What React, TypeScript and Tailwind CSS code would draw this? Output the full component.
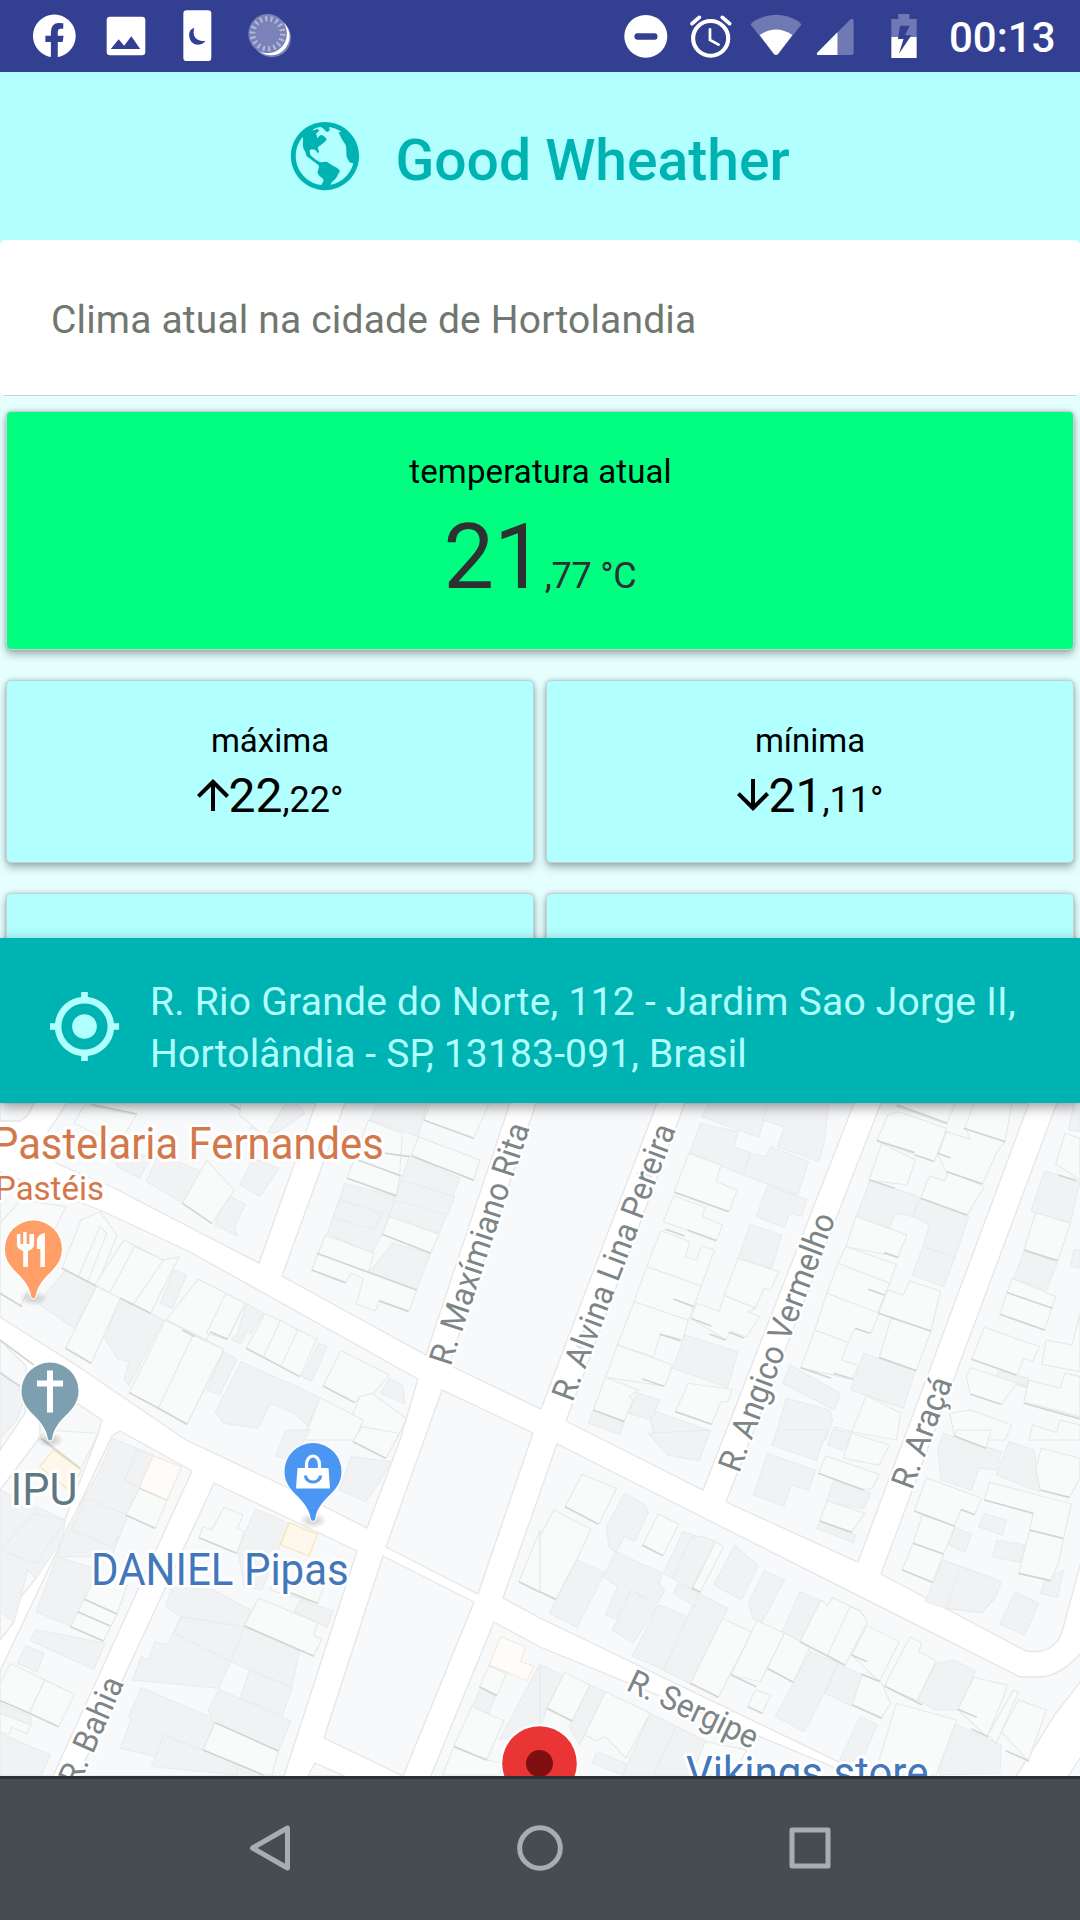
import type { ReactNode } from "react";
import { IoMdArrowDown, IoMdArrowUp, IoMdGlobe, IoMdLocate } from "react-icons/io";

/* ---------- status bar ---------- */

function Glyph({ x, w, className, children }: { x: number; w: number; className: string; children: ReactNode }) {
  return (
    <svg viewBox={`${x} 0 ${w} 216`} preserveAspectRatio="none" fill="#fff" className={`h-[72px] shrink-0 ${className}`}>
      {children}
    </svg>
  );
}

function StatusBar() {
  return (
    <header className="flex h-[72px] shrink-0 justify-between bg-[#334092] pl-[33px] pr-[24px]">
      <div className="flex">
        <Glyph x={95} w={125} className="w-[43px]">
          <path d="M147 171V126H131V107H147V96Q148 69 170 69Q178 69 183 70V86H176Q167 86 167 96V107H184L181 126H167V171A62 64 0 1 0 147 171Z" />
        </Glyph>
        <Glyph x={308} w={117} className="ml-[30px] w-[40px]">
          <path fillRule="evenodd" d="M320 50H413Q423 50 423 60V156Q423 166 413 166H320Q310 166 310 156V60Q310 50 320 50ZM322 147H408L382 109L361 137L345 118Z" />
        </Glyph>
        <Glyph x={532} w={85} className="ml-[37px] w-[29px]">
          <rect x="533" y="31" width="82" height="152" rx="10" />
          <path d="M565 83Q549 88 550 107Q552 132 575 134Q590 134 598 122C575 126 557 112 565 83Z" fill="#334092" />
        </Glyph>
        <Glyph x={720} w={128} className="ml-[36px] w-[44px]">
          <ellipse cx="789" cy="114" rx="56" ry="58" opacity=".35" />
          <ellipse cx="787" cy="109" rx="54" ry="57" />
          <ellipse cx="777" cy="101" rx="56" ry="59" fill="#7a82b8" />
          <ellipse cx="777" cy="101" rx="44" ry="45" fill="none" stroke="#b3b8d9" strokeWidth="16" strokeDasharray="6 9.500" />
        </Glyph>
      </div>
      <div className="flex">
        <Glyph x={243} w={127} className="w-[44px]">
          <path fillRule="evenodd" d="M306 45A62 64 0 1 1 305.900 45ZM281 100Q273 101 273 109.500Q273 118 281 119H333Q340 118 340 109.500Q340 101 333 100Z" />
        </Glyph>
        <Glyph x={435} w={122} className="ml-[22px] w-[42px]">
          <g fill="none" stroke="#fff" strokeLinecap="round">
            <ellipse cx="495" cy="115" rx="51" ry="52" strokeWidth="12" />
            <path d="M441 71L462 52M529 52L550 71" strokeWidth="11" />
            <path d="M493 88V120L518 134" strokeWidth="8" />
          </g>
        </Glyph>
        <Glyph x={608} w={152} className="ml-[18px] w-[52px]">
          <path d="M610 74Q612 68 620 63Q684 26 748 63Q756 68 758 74L690 162Q684 168 678 162Z" opacity=".3" />
          <path d="M636 105Q684 72 732 105L690 162Q684 168 678 162Z" />
        </Glyph>
        <Glyph x={803} w={110} className="ml-[14px] w-[38px]">
          <path d="M805 160L903 58Q911 54 912 62V158Q912 165 905 165H808Q804 164 805 160Z" opacity=".3" />
          <path d="M806 159L865 97V165H808Q804 163 806 159Z" />
        </Glyph>
        <Glyph x={1021} w={75} className="ml-[37px] w-[26px]">
          <path d="M1042 42H1074V57H1095V111H1022V57H1042Z" opacity=".3" />
          <path d="M1022 111H1095V174H1022Z" />
          <path d="M1047 77H1075L1062 106H1080L1044 161L1057 117H1041Z" fill="#334092" />
        </Glyph>
        <span className="ml-[32px] w-[107px] whitespace-nowrap pt-[14px] text-[42px] font-medium leading-[48px] text-white">00:13</span>
      </div>
    </header>
  );
}

/* ---------- weather cards ---------- */

function Card({ tint, className, children }: { tint: string; className: string; children?: ReactNode }) {
  return (
    <div className={`flex flex-col items-center rounded-[5px] border border-[#c9d0d0] shadow-[0_5px_8px_rgba(0,0,0,0.26),0_0_5px_rgba(0,0,0,0.2)] ${tint} ${className}`}>
      {children}
    </div>
  );
}

function Extreme({ label, whole, cents, up }: { label: string; whole: string; cents: string; up?: boolean }) {
  const Arrow = up ? IoMdArrowUp : IoMdArrowDown;
  return (
    <Card tint="bg-[#b2ffff]" className="h-[183px] flex-1 pt-[40px] text-black">
      <span className="text-[33px] leading-[40px]">{label}</span>
      <div className="mt-[5px] flex h-[60px] items-baseline leading-[60px]">
        <Arrow className="-ml-[8px] -mr-[8px] mb-[2px] h-[48px] w-[48px] self-center" />
        <span className="text-[48px]">{whole}</span>
        <span className="text-[36px]">{cents}</span>
      </div>
    </Card>
  );
}

/* ---------- map ---------- */

const BLOCKS = [
  "0,1103 0,1121 20,1121 28,1115 34,1103",
  "67,1103 36,1150 60,1165 114,1188 259,1263 316,1103",
  "345,1103 282,1276 426,1355 510,1103",
  "536,1103 449,1365 541,1409 657,1103",
  "685,1103 566,1421 703,1490 854,1103",
  "881,1103 726,1502 858,1562 1029,1103",
  "0,1172 100,1210 190,1252 418,1379 400,1440 367,1528 282,1485 186,1440 79,1367 0,1317",
  "0,1340 26,1366 25,1413 7,1440 0,1450",
  "40,1405 78,1404 102,1420 98,1434 65,1520 36,1578 20,1598 14,1622 0,1640 0,1490 40,1437",
  "112,1436 120,1431 192,1471 53,1776 0,1776 0,1671",
  "214,1483 357,1551 284,1776 78,1776",
  "442,1390 386,1547 478,1594 533,1433",
  "383,1556 474,1602 403,1776 324,1738",
  "315,1763 345,1776 308,1776",
  "494,1622 540,1647 829,1765 850,1778 430,1778",
];

type Tile = { x: number; y: number; gray: string[]; light: string[]; edges: string[] };

const TILES: Tile[] = [
  {
    x: 0, y: 1100,
    gray: ["425,245 460,160 585,215 530,310", "697,255 735,175 810,205 755,290", "655,285 713,312 680,380 690,408 625,375", "330,150 440,170 405,235 340,200", "800,100 885,40 860,10 830,10 725,85", "110,610 190,510 280,560 215,685", "305,715 350,590 475,660 375,855 360,840 375,785 340,775", "465,610 505,510 542,525 500,625", "600,870 650,755 688,778 637,885", "625,935 700,785 925,890 895,980 855,940 785,910 750,985 650,970", "1105,880 1130,835 1170,858 1175,912", "690,700 715,610 765,640 730,700 715,695 700,730 672,720", "875,830 925,730 950,740 905,843", "950,400 985,300 1000,250 1150,290 1110,400 1080,460", "968,352 1085,390 1110,340 985,300", "1150,285 1190,165 1335,235 1275,400 1130,350", "1165,240 1320,290 1300,345 1145,300", "1140,430 1250,460 1210,570 1070,520", "1075,60 1095,10 1240,10 1215,110", "0,820 75,880 50,960 0,1015"],
    light: ["215,70 245,15 395,45 345,135", "530,310 600,180 680,270 615,370", "700,10 830,10 770,110 695,45", "0,370 60,300 190,320 60,620 0,580", "180,505 235,360 290,335 340,405 280,560", "228,530 290,380 310,400 255,545", "275,555 360,420 475,480 520,470 437,640", "318,580 390,440 475,480 385,615", "190,745 280,560 350,595 265,790", "483,660 575,537 712,610 660,718 610,695 600,720", "600,700 655,580 712,610 660,718", "375,878 480,660 650,748 543,973", "460,925 560,705 650,748 543,973", "715,745 770,640 920,717 870,830", "765,770 815,660 865,690 815,800", "938,858 990,752 1130,825 1085,880 1045,890 1030,908", "1045,890 1080,880 1180,955 1150,1020 1000,1000", "880,1020 930,893 1055,960 1030,1020", "1230,60 1250,10 1420,10 1375,115", "1195,165 1215,110 1393,180 1375,243", "1008,235 1070,60 1168,100 1160,230 1150,288", "905,510 945,405 1085,460 1070,515 1210,570 1187,635 1100,605 1090,633 1035,612 1055,535 1020,520 1003,550", "1110,403 1130,350 1275,403 1250,460"],
    edges: ["180,505 280,558", "350,595 437,640", "190,745 265,790", "530,690 565,710", "375,878 460,925 543,973", "715,745 870,830", "938,858 1030,908", "905,510 1003,548", "1100,602 1187,635", "1008,235 1150,287", "1230,60 1375,115", "1195,168 1375,240", "1110,403 1250,460", "530,310 615,370", "610,695 660,718", "920,460 1210,570", "1040,180 1165,228", "1085,155 1190,170", "265,13 398,42", "670,12 698,28", "0,720 98,795", "0,818 60,860", "0,580 65,620"],
  },
  {
    x: 540, y: 1100,
    gray: ["470,50 490,10 665,10 635,112", "645,60 665,10 840,10 825,125 810,185 690,140 710,80", "435,158 465,70 575,95 565,140 610,158 590,225", "590,225 610,160 655,170 670,140 780,185 748,285", "628,350 660,258 775,298 760,348 725,340 710,383", "575,475 610,373 702,405 672,505", "918,350 958,240 1100,290 1085,350 1030,340 1015,385", "1085,350 1105,295 1245,350 1205,473 1112,440 1130,375", "1080,525 1112,440 1205,473 1172,560", "385,805 420,705 575,755 545,862", "705,850 725,795 872,880 855,930", "902,870 940,760 1090,812 1055,925", "715,895 840,930 850,960 830,1020 680,1020", "258,940 280,878 347,900 325,960", "140,970 155,930 245,963 232,1003", "320,960 335,935 490,990 485,1020 330,1000", "1425,335 1465,212 1568,245 1540,370", "1375,535 1405,455 1503,485 1470,572", "1535,90 1550,10 1568,10 1568,95", "1540,500 1550,450 1568,450 1568,505", "845,1020 855,980 905,995 900,1020", "1325,828 1330,812 1420,835 1412,865"],
    light: ["390,275 432,160 525,195 512,245 573,270 548,335", "358,365 388,287 478,322 472,350 530,375 512,422", "310,500 350,392 435,425 422,470 455,480 470,437 507,450 468,558", "273,605 310,500 468,558 450,610 430,660", "225,735 273,605 430,660 415,720 350,702 330,770", "190,832 225,735 385,795 370,840 360,858", "155,930 190,832 285,870 258,890 270,900 245,963", "393,935 430,850 558,868 545,905 525,905 498,973", "535,585 575,475 693,515 670,570 650,565 625,625", "438,655 455,610 520,635 535,587 625,625 605,635 637,650 600,710 550,695 540,720", "978,122 1010,45 1040,35 1180,85 1145,185", "955,240 992,130 1090,180 1065,255", "1155,165 1180,95 1250,118 1235,80 1260,10 1370,10 1350,125 1325,160 1285,252 1180,215", "1105,295 1130,228 1175,243 1185,215 1290,260 1240,345", "888,440 918,350 1065,405 1040,470", "865,490 888,440 1035,493 1015,550", "833,580 865,490 1015,550 1000,585 980,640", "798,690 833,580 985,640 960,700 915,685 895,728", "757,803 798,690 895,728 875,780 925,797 905,838", "983,640 1010,570 1055,585 1073,543 1163,573 1135,693", "985,773 1020,655 1135,693 1092,812", "1035,20 1040,10 1205,10 1180,72", "905,995 948,885 1047,940 1035,1020", "1497,192 1525,100 1568,115 1568,240", "1405,450 1440,338 1540,370 1503,482", "1335,643 1370,535 1497,590 1465,690", "1253,778 1290,682 1450,740 1430,785 1405,775 1385,825", "1457,793 1470,720 1545,735 1568,640 1568,815", "1238,830 1250,803 1415,860 1385,850 1340,912 1250,883", "1405,905 1420,840 1510,865 1525,820 1568,830 1568,950", "1205,1020 1190,940 1250,930 1370,975 1350,1020", "1420,1020 1430,975 1500,998 1510,960 1568,975 1568,1020"],
    edges: ["390,277 548,335", "428,390 512,422", "365,388 420,408", "387,597 447,620", "438,655 497,678", "493,703 540,720", "550,697 592,714", "347,703 408,722", "297,837 360,859", "155,930 245,965", "393,935 498,973", "978,122 1088,158", "1088,165 1143,184", "957,240 1030,265", "1155,160 1192,174", "1180,215 1285,252", "1105,295 1240,345", "1037,15 1183,70", "1000,458 1040,473", "953,568 1000,585", "915,685 958,700", "757,803 845,835", "853,820 910,838", "985,773 1092,812", "983,640 1135,693", "1405,450 1503,482", "1335,643 1465,690", "1253,778 1383,825", "1250,883 1338,913", "1405,910 1568,957", "1505,225 1558,242", "1355,577 1488,625", "1230,85 1350,125"],
  },
  {
    x: 0, y: 1430,
    gray: ["290,120 328,25 445,75 405,172 370,255 350,310 325,380 165,380 190,300 240,210", "362,150 398,60 445,75 405,172", "208,300 250,205 370,255 350,310 325,350", "0,180 40,200 190,270 180,330 105,445 80,420 60,500 40,575 0,545", "0,360 100,250 190,270 105,400", "105,545 165,380 290,420 205,590", "88,632 105,598 305,640 272,718", "50,700 75,648 128,670 108,725", "690,360 742,237 838,280 760,480 710,470", "480,530 500,470 620,480 728,540 710,590 870,665 848,770 725,720 670,695 635,775 385,750 410,680 430,690 450,635 485,645 525,560", "505,610 525,560 710,590 670,695", "373,862 410,772 625,868 590,960 765,1035 700,1040 350,955 380,870", "440,1010 475,915 590,960 690,1000 690,1035", "605,840 635,778 845,873 808,965 620,880", "697,803 725,720 850,773 820,855", "855,545 870,510 967,542 950,592", "985,180 1020,80 1135,95 1105,150 1062,215", "800,80 830,0 900,0 850,90", "1370,830 1395,775 1440,795 1420,850", "1450,930 1568,700 1568,900", "0,910 147,975 120,1035 0,1035", "0,820 90,860 90,885 0,850"],
    light: ["118,20 135,0 285,10 235,115", "365,255 405,175 485,210 450,295", "245,508 275,440 370,465 340,552", "205,590 245,508 340,552 300,633", "578,323 590,290 615,300 650,232 705,255 690,295 710,305 687,370", "710,588 750,505 922,578 910,615 935,628 910,678", "590,960 625,878 808,963 790,1035 765,1035", "30,700 0,760 0,810 85,850 130,750", "85,850 130,750 217,793 170,890", "0,850 90,885 78,912 35,892 25,915 0,905", "1025,35 1050,-10 1160,10 1120,85", "1392,770 1420,708 1470,730 1443,797", "1318,948 1370,830 1463,872 1413,990", "1285,1035 1318,950 1413,990 1460,1000 1450,1035", "1507,455 1568,300 1568,487", "783,480 800,440 940,470 922,520"],
    edges: ["118,25 232,115", "405,174 485,210", "365,255 450,295", "245,508 340,552", "205,590 300,633", "578,323 687,370", "710,588 910,678", "625,878 808,963", "590,960 765,1035", "0,812 85,850 170,890", "1025,35 1120,85", "1392,770 1443,797", "1507,455 1568,487", "835,485 922,520", "225,545 320,588", "1318,950 1413,990"],
  },
  {
    x: 540, y: 1430,
    gray: ["193,292 245,190 303,222 315,245 275,335 245,320 220,368 200,350", "27,550 107,388 188,428 108,593", "183,440 220,365 355,430 345,460 362,480 340,520 275,485 235,570 190,555 225,470", "210,600 265,480 340,530 270,640", "268,678 345,525 430,560 360,720", "358,720 460,490 545,535 525,580 510,605 437,762", "358,430 415,305 510,335 440,475", "385,445 440,320 475,320 510,335 440,475", "388,490 400,460 460,490 450,530", "505,465 565,345 633,408 585,510", "605,520 652,422 710,450 645,575 618,565", "703,605 755,485 813,512 755,635", "683,860 785,665 865,700 825,790 768,905", "828,790 865,700 947,740 905,828", "1095,810 1150,700 1200,690 1265,722 1215,840 1150,840", "870,990 930,860 980,885 930,1000", "620,195 660,70 800,120 780,180 730,165 708,228", "673,45 690,0 833,0 803,92", "315,10 495,0 462,93 370,75", "835,45 850,0 905,10 880,62", "830,215 855,150 960,190 940,237", "802,295 815,275 917,315 910,338", "1155,60 1170,10 1340,65 1325,120 1275,115 1252,180 1165,150", "1325,135 1362,35 1435,60 1450,185", "1118,515 1170,390 1340,455 1320,505 1282,548 1180,535", "1180,535 1220,410 1340,455 1320,505 1282,548", "1273,290 1290,250 1355,270 1342,315", "1315,380 1327,330 1407,345 1395,398", "1335,582 1380,485 1448,520 1407,615", "1453,490 1470,440 1520,420 1503,502", "1185,345 1205,292 1253,312 1235,365", "0,705 68,735 20,835 0,900", "85,890 145,765 190,785 115,945", "240,1035 320,850 485,935 440,1035", "330,1035 395,890 485,935 440,1035", "150,1000 165,965 250,1000 240,1035", "1175,930 1200,880 1340,945 1335,1030 1160,1035"],
    light: ["73,230 122,133 222,175 170,283", "0,485 0,320 40,240 148,298 107,388 45,510", "297,347 343,252 403,283 357,377", "442,477 510,335 533,350 465,487", "437,760 530,565 615,607 518,802", "555,735 630,572 710,610 640,755", "660,715 710,610 785,650 735,757", "755,635 815,510 835,525 850,503 930,543 950,575 885,707", "835,675 900,530 930,543 950,575 885,707", "905,675 950,587 1043,635 985,755", "1000,768 1075,620 1108,640 1100,665 1150,692 1095,812", "907,825 935,735 990,755 1018,820 990,865", "603,830 625,780 670,795 645,850", "1213,838 1260,742 1355,765 1350,790 1298,920", "1300,915 1375,780 1390,785 1325,940", "1340,905 1390,810 1470,840 1418,993", "985,990 1035,820 1210,870 1150,1035 1000,1035", "20,835 72,727 145,765 93,873", "130,915 190,785 320,850 250,985 190,920 165,932", "808,130 830,78 985,133 965,175 940,180", "812,273 835,212 943,250 905,307", "880,85 905,10 1015,45 985,105", "1087,243 1122,143 1282,205 1262,253 1222,240 1203,288", "1083,340 1110,255 1205,288 1172,372", "1052,420 1083,340 1172,372 1140,457", "1290,210 1305,157 1543,222 1520,325 1422,300 1432,250", "1390,430 1422,302 1520,325 1505,400 1483,452", "1440,115 1455,55 1568,85 1568,145 1537,202 1452,180", "1203,18 1210,0 1310,0 1295,55", "480,935 600,960 560,1035 440,1035"],
    edges: ["73,230 170,283", "0,485 45,508", "297,345 357,377", "442,475 467,487", "437,760 518,802", "555,735 628,770", "660,715 735,757", "755,635 885,705", "905,675 950,695", "933,732 987,755", "1000,768 1110,825", "907,825 993,865", "603,830 645,850", "1213,838 1268,862", "1252,897 1300,920", "1352,962 1420,993", "20,835 93,873", "808,130 940,180", "812,273 905,307", "1087,243 1203,288", "1222,238 1262,254", "1052,420 1140,457", "1083,340 1172,372", "1290,210 1432,250", "1422,300 1518,325", "1390,430 1483,452", "1452,180 1537,202", "1203,18 1295,55"],
  },
];

function Street({ x, y, rotate, children }: { x: number; y: number; rotate: number; children: string }) {
  return (
    <text transform={`translate(${x} ${y}) rotate(${rotate}) scale(.95 1)`} fontSize="33" fill="#7d8587" stroke="#fff" strokeWidth="5" strokeLinejoin="round" paintOrder="stroke">
      {children}
    </text>
  );
}

function Place({ x, y, size = 44, squeeze = 0.955, color, children }: { x: number; y: number; size?: number; squeeze?: number; color: string; children: string }) {
  return (
    <text transform={`translate(${x} ${y}) scale(${squeeze} 1)`} fontSize={size} fill={color} stroke="#fff" strokeWidth="6" strokeLinejoin="round" paintOrder="stroke">
      {children}
    </text>
  );
}

function Pin({ x, y, color, children }: { x: number; y: number; color: string; children: ReactNode }) {
  return (
    <g transform={`translate(${x} ${y})`}>
      <ellipse cx="0" cy="49" rx="14" ry="8" fill="url(#pinShade)" />
      <path d="M-28.500 0A28.500 28.500 0 0 1 28.500 0C28.500 22 6 25 2.200 47A2.200 2.200 0 0 1 -2.200 47C-6 25 -28.500 22 -28.500 0Z" fill={color} stroke="#fff" strokeOpacity=".7" strokeWidth="3" paintOrder="stroke" />
      {children}
    </g>
  );
}

function CityMap() {
  return (
    <svg viewBox="0 1103 1080 673" className="block h-[673px] w-full bg-white" fontFamily="Roboto, sans-serif">
      <defs>
        <radialGradient id="pinShade">
          <stop offset="0" stopColor="#000" stopOpacity=".22" />
          <stop offset="1" stopColor="#000" stopOpacity="0" />
        </radialGradient>
      </defs>
      <g fill="#f8f9fb" stroke="#e5e6e7" strokeWidth="1.300">
        {BLOCKS.map((p) => <polygon key={p} points={p} />)}
        <path d="M1057 1103L881 1574L1026 1651Q1054 1655 1062 1632L1082 1558V1100Z" />
        <path d="M557 1444L503 1598L540 1618L872 1778H1015L1056 1713L1082 1680V1652Q1060 1677 1038 1677H1020Z" />
        <path d="M1067 1778L1082 1755V1778Z" />
      </g>
      {TILES.map((t) => (
        <g key={`${t.x}-${t.y}`} transform={`translate(${t.x} ${t.y}) scale(.3444 .3333)`}>
          <g fill="#f1f2f4" stroke="#e9eaeb" strokeWidth="3">{t.gray.map((p) => <polygon key={p} points={p} />)}</g>
          <g fill="#f9fbfa" stroke="#e6e8e7" strokeWidth="3">{t.light.map((p) => <polygon key={p} points={p} />)}</g>
          <g fill="none" stroke="#d3d6d5" strokeWidth="5">{t.edges.map((p) => <polyline key={p} points={p} />)}</g>
        </g>
      ))}
      <g transform="translate(0 1430) scale(.3444 .3333)" strokeWidth="3">
        <polygon points="405,172 445,77 527,110 485,210" fill="#fdfcfb" stroke="#f6e7d6" />
        <polygon points="1420,705 1455,620 1525,650 1512,695 1550,710 1530,752" fill="#fdfcfb" stroke="#f6e7d6" />
        <polygon points="115,110 155,60 237,122 200,180" fill="#fef8ec" stroke="#fbe3a8" />
        <polygon points="815,345 840,278 922,313 897,378" fill="#fef8ec" stroke="#fbe3a8" />
      </g>
      <g fill="#e4e5ee">
        <path d="M636 1174L641 1168L651 1162L653 1174L649 1186H643L643 1176Z" />
        <path d="M575 1344L583 1330L592 1332L586 1346L580 1352Z" />
      </g>

      <Street x={450.500} y={1367} rotate={-71.7}>R. Maxímiano Rita</Street>
      <Street x={572.500} y={1403} rotate={-69.3}>R. Alvina Lina Pereira</Street>
      <Street x={739} y={1474} rotate={-69.3}>R. Angico Vermelho</Street>
      <Street x={912} y={1491} rotate={-69.5}>R. Araçá</Street>
      <Street x={78.500} y={1787} rotate={-66.3}>R. Bahia</Street>
      <Street x={625} y={1689.500} rotate={25.3}>R. Sergipe</Street>

      <Place x={-8} y={1158.500} squeeze={0.95} color="#d2784a">Pastelaria Fernandes</Place>
      <Place x={-5} y={1199.500} size={33} squeeze={1} color="#d2784a">Pastéis</Place>
      <Place x={10.500} y={1504.500} squeeze={0.98} color="#5f7983">IPU</Place>
      <Place x={91} y={1585} color="#4277bb">DANIEL Pipas</Place>
      <Place x={686} y={1788} color="#4277bb">Vikings store</Place>

      <Pin x={33.400} y={1249} color="#ff9e67">
        <g fill="#fff">
          <path d="M-16.500 -15H-13V-5H-10.200V-17H-6.800V-5H-4V-15H0.600V-4Q0 0 -5.500 2V18H-10.200V2Q-16 0 -16.500 -4Z" />
          <path d="M11.500 -16V18H7V0H3.500V-8Q4 -15 11.500 -16Z" />
        </g>
      </Pin>
      <Pin x={50} y={1391} color="#7d9fb0">
        <path d="M-3 -20.500H3V-10.500H13V-4.500H3V21.500H-3V-4.500H-13V-10.500H-3Z" fill="#fff" />
      </Pin>
      <Pin x={313} y={1471.500} color="#4b96f3">
        <path d="M-15.500 -3.500H15.500L17 17H-17Z" fill="#fff" />
        <path d="M-6.500 -3V-7A6.500 8.500 0 0 1 6.500 -7V-3" fill="none" stroke="#fff" strokeWidth="3.200" />
        <path d="M-7.500 4A7.500 6.500 0 0 0 7.500 4" fill="none" stroke="#4b96f3" strokeWidth="3.200" />
      </Pin>
      <circle cx="539.500" cy="1763.500" r="39.500" fill="#fff" />
      <circle cx="539.500" cy="1763.500" r="37.300" fill="#ea3535" />
      <circle cx="539.500" cy="1763.500" r="13.500" fill="#7f0f10" />
    </svg>
  );
}

/* ---------- system navigation ---------- */

function NavIcon({ children }: { children: ReactNode }) {
  return (
    <svg viewBox="-24 -24 48 48" fill="none" stroke="#a9adaf" strokeWidth="5" strokeLinejoin="round" className="h-12 w-12">
      {children}
    </svg>
  );
}

/* ---------- page ---------- */

export default function App() {
  return (
    <div className="flex h-[1920px] w-[1080px] flex-col overflow-hidden bg-[#e5ffff] font-['Roboto',sans-serif]">
      <StatusBar />
      <div className="flex h-[168px] shrink-0 items-center justify-center bg-[#b2ffff] pr-[7px] text-[#00b3b3]">
        <IoMdGlobe className="h-[84px] w-[84px]" />
        <h1 className="ml-[28px] pt-[10px] text-[57px] font-medium leading-[68px]">Good Wheather</h1>
      </div>
      <main className="flex h-[698px] shrink-0 flex-col overflow-hidden bg-[linear-gradient(#b2ffff_6px,#e5ffff_6px)]">
        <div className="h-[155px] shrink-0 rounded-[5px] bg-white px-[51px] pt-[56px]">
          <p className="text-[39px] leading-[48px] tracking-[0.17px] text-[#6f776f]">Clima atual na cidade de Hortolandia</p>
        </div>
        <hr className="mx-[4px] h-px shrink-0 border-0 bg-[#c9cfcf]" />
        <Card tint="bg-[#00ff80]" className="mx-[6px] mt-[15px] h-[239px] shrink-0 pt-[40px]">
          <span className="ml-px text-[33px] leading-[40px] tracking-[0.12px] text-black">temperatura atual</span>
          <div className="mt-[13px] flex items-baseline leading-[106px] text-[#2e3131]">
            <span className="text-[90px]">21</span>
            <span className="text-[36px] tracking-[-0.25px]">,77 °C</span>
          </div>
        </Card>
        <div className="mx-[6px] mt-[30px] flex shrink-0 gap-[12px]">
          <Extreme label="máxima" whole="22" cents=",22°" up />
          <Extreme label="mínima" whole="21" cents=",11°" />
        </div>
        <div className="mx-[6px] mt-[30px] flex shrink-0 gap-[12px]">
          <Card tint="bg-[#b2ffff]" className="h-[183px] flex-1" />
          <Card tint="bg-[#b2ffff]" className="h-[183px] flex-1" />
        </div>
      </main>
      <div className="relative z-10 flex h-[165px] shrink-0 items-center bg-[#00b3b3] pl-[45px] pt-[15px] text-[#b2ffff] shadow-[0_4px_12px_rgba(0,0,0,0.4)]">
        <IoMdLocate className="mb-[3px] h-[79px] w-[79px] shrink-0" />
        <p className="ml-[26px] whitespace-nowrap text-[39px] leading-[52px] tracking-[0.25px]">
          R. Rio Grande do Norte, 112 - Jardim Sao Jorge II,<br />
          <span className="tracking-[0.16px]">Hortolândia - S<span className="tracking-[-8px]">P</span>, 13183-091, Brasil</span>
        </p>
      </div>
      <CityMap />
      <nav className="flex h-[144px] shrink-0 items-center justify-center gap-[222px] border-t-[3px] border-[#2b3335] bg-[#454c52] pb-[3px]">
        <NavIcon><path d="M-17.500 0L17.500 -20V20Z" /></NavIcon>
        <NavIcon><circle r="20.300" /></NavIcon>
        <NavIcon><rect x="-18" y="-18" width="36" height="36" /></NavIcon>
      </nav>
    </div>
  );
}
